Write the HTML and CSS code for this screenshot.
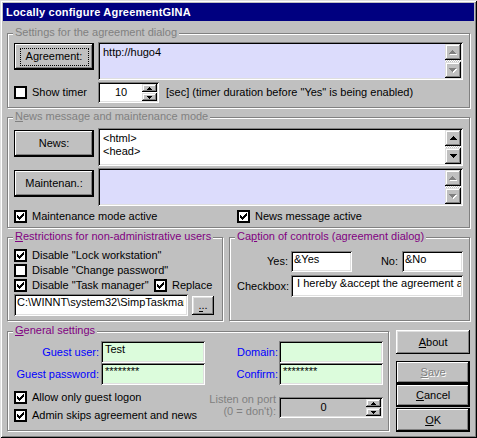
FILE: index.html
```html
<!DOCTYPE html>
<html>
<head>
<meta charset="utf-8">
<link rel="stylesheet" href="styles.css">
</head>
<body>
<svg class="defs" width="0" height="0" aria-hidden="true">
  <defs>
    <path id="au" d="M3 0h1v1h1v1h1v1h1v1H0V3h1V2h1V1h1z"/>
    <path id="ad" d="M0 0h7v1h-1v1h-1v1h-1v1h-1v-1h-1v-1h-1v-1h-1z"/>
    <path id="su" d="M2 0h1v1h1v1h1v1H0V2h1V1h1z"/>
    <path id="sd" d="M0 0h5v1h-1v1h-1v1h-1v-1h-1v-1h-1z"/>
    <path id="ck" d="M0 2h1v3H0z M1 3h1v3H1z M2 4h1v3H2z M3 3h1v3H3z M4 2h1v3H4z M5 1h1v3H5z M6 0h1v3H6z"/>
  </defs>
</svg>

<div class="window">
  <div class="titlebar">Locally configure AgreementGINA</div>
  <div class="client">

    <section class="group g1">
      <span class="glabel dis">Settings for the agreement dialog</span>
      <div class="mrow">
        <button class="btn def focus side">Agreement:</button>
        <div class="memo lav">
          <div class="mtext">http://hugo4</div>
          <div class="sbar">
            <span class="sbtn"><svg width="8" height="5"><use href="#au" x="1" y="1" fill="#fff"/><use href="#au" fill="#808080"/></svg></span>
            <span class="sbtn"><svg width="8" height="5"><use href="#ad" x="1" y="1" fill="#fff"/><use href="#ad" fill="#808080"/></svg></span>
          </div>
        </div>
      </div>
      <div class="trow">
        <label class="cb tcb"><span class="box"></span>Show timer</label>
        <div class="spin timer">
          <span class="val">10</span>
          <span class="sbs">
            <span class="sbtn"><svg width="5" height="3"><use href="#su"/></svg></span>
            <span class="sbtn"><svg width="5" height="3"><use href="#sd"/></svg></span>
          </span>
        </div>
        <span class="sec">[sec] (timer duration before "Yes" is being enabled)</span>
      </div>
    </section>

    <section class="group g2">
      <span class="glabel dis"><u>N</u>ews message and maintenance mode</span>
      <div class="mrow">
        <button class="btn def side">News:</button>
        <div class="memo">
          <div class="mtext">&lt;html&gt;<br>&lt;head&gt;</div>
          <div class="sbar">
            <span class="sbtn"><svg width="7" height="4"><use href="#au"/></svg></span>
            <span class="sbtn"><svg width="7" height="4"><use href="#ad"/></svg></span>
          </div>
        </div>
      </div>
      <div class="mrow">
        <button class="btn def side">Maintenan.:</button>
        <div class="memo lav">
          <div class="mtext"></div>
          <div class="sbar">
            <span class="sbtn"><svg width="8" height="5"><use href="#au" x="1" y="1" fill="#fff"/><use href="#au" fill="#808080"/></svg></span>
            <span class="sbtn"><svg width="8" height="5"><use href="#ad" x="1" y="1" fill="#fff"/><use href="#ad" fill="#808080"/></svg></span>
          </div>
        </div>
      </div>
      <div class="crow">
        <label class="cb mcb"><span class="box"><svg width="7" height="7"><use href="#ck"/></svg></span>Maintenance mode active</label>
        <label class="cb"><span class="box"><svg width="7" height="7"><use href="#ck"/></svg></span>News message active</label>
      </div>
    </section>

    <div class="brow">
      <section class="group g3">
        <span class="glabel purple"><u>R</u>estrictions for non-administrative users</span>
        <label class="cb"><span class="box"><svg width="7" height="7"><use href="#ck"/></svg></span>Disable "Lock workstation"</label>
        <label class="cb"><span class="box"></span>Disable "Change password"</label>
        <div class="rrow">
          <label class="cb tmcb"><span class="box"><svg width="7" height="7"><use href="#ck"/></svg></span>Disable "Task manager"</label>
          <label class="cb"><span class="box"><svg width="7" height="7"><use href="#ck"/></svg></span>Replace</label>
        </div>
        <div class="prow">
          <div class="field path"><span class="ftext">C:\WINNT\system32\SimpTaskman.exe</span></div>
          <button class="btn dots"><span class="dtext">...</span></button>
        </div>
      </section>

      <section class="group g4">
        <span class="glabel purple">Ca<u>p</u>tion of controls (agreement dialog)</span>
        <div class="yrow">
          <span class="clbl">Yes:</span>
          <div class="field yesno"><span class="ftext">&amp;Yes</span></div>
          <span class="clbl nolbl">No:</span>
          <div class="field yesno"><span class="ftext">&amp;No</span></div>
        </div>
        <div class="yrow cbrow">
          <span class="clbl">Checkbox:</span>
          <div class="field cbfield"><span class="ftext">&nbsp;I hereby &amp;accept the agreement and the conditions</span></div>
        </div>
      </section>
    </div>

    <div class="frow">
      <section class="group g5">
        <span class="glabel purple"><u>G</u>eneral settings</span>
        <div class="urow">
          <span class="ulbl">Guest user:</span>
          <div class="field green ufield"><span class="ftext">Test</span></div>
          <span class="ulbl dlbl">Domain:</span>
          <div class="field green ufield"><span class="ftext"></span></div>
        </div>
        <div class="urow">
          <span class="ulbl">Guest password:</span>
          <div class="field green ufield"><span class="ftext">********</span></div>
          <span class="ulbl dlbl">Confirm:</span>
          <div class="field green ufield"><span class="ftext">********</span></div>
        </div>
        <div class="lrow">
          <div class="lcol">
            <label class="cb"><span class="box"><svg width="7" height="7"><use href="#ck"/></svg></span>Allow only guest logon</label>
            <label class="cb"><span class="box"><svg width="7" height="7"><use href="#ck"/></svg></span>Admin skips agreement and news</label>
          </div>
          <span class="listen">Listen on port<br>(0 = don't):</span>
          <div class="spin port">
            <span class="val">0</span>
            <span class="sbs">
              <span class="sbtn"><svg width="5" height="3"><use href="#su"/></svg></span>
              <span class="sbtn"><svg width="5" height="3"><use href="#sd"/></svg></span>
            </span>
          </div>
        </div>
      </section>

      <div class="bcol">
        <button class="btn about"><span><u>A</u>bout</span></button>
        <button class="btn def save"><span><u>S</u>ave</span></button>
        <button class="btn def cancel"><span><u>C</u>ancel</span></button>
        <button class="btn def ok"><span><u>O</u>K</span></button>
      </div>
    </div>

  </div>
</div>
</body>
</html>
```

FILE: styles.css
```css
* { box-sizing: border-box; }
html, body { margin: 0; padding: 0; }
body {
  background: #c0c0c0;
  font-family: "Liberation Sans", Arial, sans-serif;
  font-size: 11px;
  line-height: 13px;
  color: #000;
}
.defs { position: absolute; width: 0; height: 0; overflow: hidden; }
u { text-decoration: underline; text-underline-offset: 1px; }

.window {
  width: 477px;
  height: 438px;
  padding: 3px;
  background: #c0c0c0;
  box-shadow: inset 1px 1px 0 #dfdfdf, inset -1px -1px 0 #000,
              inset 2px 2px 0 #fff, inset -2px -2px 0 #808080;
}
.titlebar {
  height: 18px;
  background: #000080;
  color: #fff;
  font-weight: bold;
  line-height: 18px;
  padding-left: 3px;
  letter-spacing: 0.2px;
  white-space: nowrap;
}
.client {
  display: flex;
  flex-direction: column;
  padding: 12px 4px 0 4px;
}

/* group boxes */
.group {
  position: relative;
  border: 1px solid #808080;
  box-shadow: inset 1px 1px 0 #fff, 1px 1px 0 #fff;
}
.glabel {
  position: absolute;
  left: 5px;
  top: -8px;
  padding: 0 2px;
  background: #c0c0c0;
  line-height: 13px;
  white-space: nowrap;
}
.dis { color: #808080; }
.purple { color: #800080; }

/* buttons */
.btn {
  position: relative;
  display: flex;
  align-items: center;
  justify-content: center;
  padding: 0;
  border: 0;
  background: #c0c0c0;
  font: inherit;
  line-height: 13px;
  color: #000;
  box-shadow: inset -1px -1px 0 #000, inset 1px 1px 0 #fff,
              inset -2px -2px 0 #808080, inset 2px 2px 0 #dfdfdf;
}
.btn.def {
  box-shadow: inset 0 0 0 1px #000, inset -2px -2px 0 #000,
              inset 2px 2px 0 #fff, inset -3px -3px 0 #808080;
}
.btn.focus::after {
  content: "";
  position: absolute;
  left: 6px; right: 5px; top: 5px; bottom: 4px;
  border: 1px dotted #000;
}
.btn.side { width: 80px; height: 27px; margin-top: 2px; flex: none; }

/* sunken fields */
.field, .memo, .spin {
  background: #fff;
  box-shadow: inset 1px 1px 0 #808080, inset -1px -1px 0 #fff,
              inset 2px 2px 0 #000, inset -2px -2px 0 #dfdfdf;
}
.field { padding: 2px; overflow: hidden; white-space: nowrap; }
.ftext { display: block; padding-left: 1px; line-height: 13px; overflow: hidden; }
.lav { background: #dcdcfc; }
.green { background: #dcfcdc; }

.memo {
  display: flex;
  width: 365px;
  height: 38px;
  margin-left: 4px;
  padding: 2px;
  flex: none;
}
.mtext { flex: 1; padding: 2px 3px; white-space: nowrap; }
.sbar {
  width: 16px;
  display: flex;
  flex-direction: column;
  justify-content: space-between;
  background: repeating-conic-gradient(#fff 0 25%, #c0c0c0 0 50%) 0 0 / 2px 2px;
}
.sbtn {
  display: flex;
  align-items: center;
  justify-content: center;
  width: 16px;
  height: 16px;
  background: #c0c0c0;
  box-shadow: inset -1px -1px 0 #000, inset 1px 1px 0 #dfdfdf,
              inset -2px -2px 0 #808080, inset 2px 2px 0 #fff;
}
.sbtn svg { display: block; }

/* spinners */
.spin { display: flex; padding: 2px; flex: none; }
.spin .val { flex: 1; text-align: center; line-height: 17px; }
.spin .sbs { width: 15px; display: flex; flex-direction: column; gap: 1px; }
.spin .sbs .sbtn { width: 15px; height: auto; flex: 1; }

/* checkboxes */
.cb {
  display: flex;
  align-items: center;
  height: 13px;
  white-space: nowrap;
  flex: none;
}
.box {
  width: 13px;
  height: 13px;
  margin-right: 5px;
  border: 2px solid #000;
  background: #fff;
  display: flex;
  align-items: center;
  justify-content: center;
  flex: none;
}
.box svg { display: block; shape-rendering: crispEdges; }

/* group 1 */
.g1 { height: 75px; padding: 8px 0 0 6px; }
.mrow { display: flex; align-items: flex-start; }
.g1 .btn.side { margin-top: 1px; }
.trow { display: flex; align-items: center; height: 21px; margin-top: 2px; }
.tcb { width: 84px; }
.timer { width: 61px; height: 21px; }
.sec { margin-left: 7px; white-space: nowrap; }

/* group 2 */
.g2 { height: 111px; margin-top: 9px; padding: 10px 0 0 6px; }
.g2 .mrow + .mrow { margin-top: 2px; }
.crow { display: flex; margin-top: 4px; }
.mcb { width: 223px; }

/* groups 3 and 4 */
.brow { display: flex; margin-top: 9px; }
.g3 {
  width: 216px;
  height: 84px;
  padding: 11px 0 0 6px;
  display: flex;
  flex-direction: column;
  gap: 2px;
}
.rrow { display: flex; }
.tmcb { width: 140px; }
.prow { display: flex; align-items: flex-start; }
.path { width: 174px; height: 22px; flex: none; }
.path .ftext { padding-left: 1px; width: 168px; }
.btn.dots { width: 22px; height: 19px; margin: 2px 0 0 4px; flex: none; }
.dtext {
  display: block;
  line-height: 11px;
  padding-bottom: 1px;
  background: linear-gradient(#000, #000) 1px 100% / 4px 1px no-repeat;
}

.g4 { width: 241px; height: 84px; margin-left: 6px; padding: 13px 0 0 7px; }
.yrow { display: flex; align-items: center; height: 21px; }
.cbrow { height: 22px; margin-top: 3px; }
.clbl { width: 52px; padding-right: 1px; text-align: right; flex: none; margin-right: 2px; }
.nolbl { width: 50px; padding-right: 4px; margin-right: 0; }
.yesno { width: 61px; height: 21px; flex: none; }
.cbfield { width: 172px; height: 22px; flex: none; }
.yrow .ftext { padding-left: 1px; }

/* group 5 and buttons */
.frow { display: flex; align-items: flex-start; margin-top: 9px; }
.g5 { width: 383px; height: 100px; margin-top: 1px; padding-top: 9px; }
.urow { display: flex; height: 22px; }
.ulbl {
  width: 92px;
  padding-right: 1px;
  text-align: right;
  line-height: 22px;
  color: #0000ff;
  flex: none;
  white-space: nowrap;
}
.dlbl { width: 73px; padding-right: 0; }
.ufield { width: 104px; height: 22px; margin-left: 1px; flex: none; }
.ufield .ftext { padding-left: 2px; }
.lrow { display: flex; align-items: flex-start; margin-top: 6px; }
.lcol {
  width: 196px;
  padding-left: 6px;
  display: flex;
  flex-direction: column;
  gap: 5px;
  flex: none;
}
.listen {
  width: 73px;
  padding: 2px 1px 0 0;
  margin-right: 1px;
  text-align: right;
  line-height: 12px;
  color: #808080;
  flex: none;
  white-space: nowrap;
}
.port { width: 104px; height: 21px; margin: 6px 0 0 1px; background: #c0c0c0; }

.bcol { width: 74px; margin-left: 7px; display: flex; flex-direction: column; }
.btn.about { height: 24px; }
.btn.save { height: 23px; margin-top: 7px; color: #808080; text-shadow: 1px 1px 0 #fff; }
.btn.cancel { height: 23px; }
.btn.ok { height: 24px; margin-top: 1px; }
```
